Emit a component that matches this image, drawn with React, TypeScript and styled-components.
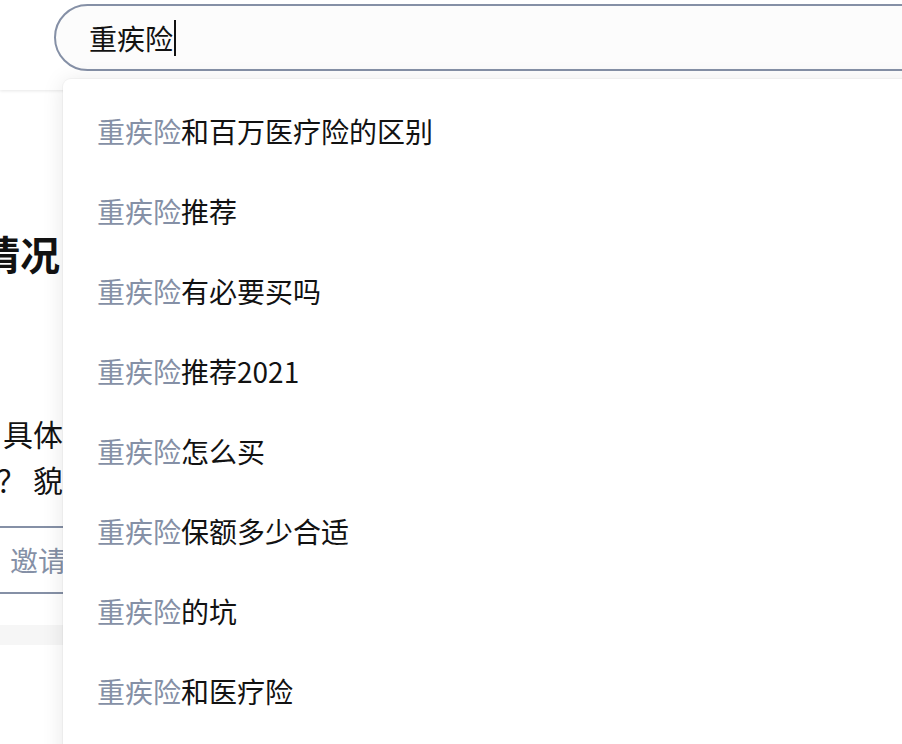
import styled, { createGlobalStyle } from "styled-components";

const GlobalStyle = createGlobalStyle`
  html, body {
    margin: 0;
    padding: 0;
    background: #ffffff;
    font-family: "Noto Sans CJK SC", "Noto Sans", sans-serif;
    color: #121212;
    overflow: hidden;
  }
`;

const PageSC = styled.div`
  position: relative;
  width: 902px;
  height: 744px;
  overflow: hidden;
  background: #f6f6f6;
`;

const HeaderSC = styled.header`
  position: relative;
  z-index: 1;
  height: 90px;
  background: #ffffff;
  box-shadow: 0 1px 3px rgba(18, 18, 18, 0.1);
  padding: 4px 0 0 54px;
  box-sizing: border-box;
`;

const SearchBoxSC = styled.div`
  display: flex;
  align-items: center;
  width: 1000px;
  height: 67px;
  box-sizing: border-box;
  border: 2px solid #8590a6;
  border-radius: 34px;
  background: #fcfcfc;
  padding-left: 33px;
  font-size: 28px;
  color: #121212;
`;

const CaretSC = styled.span`
  display: inline-block;
  width: 2px;
  height: 36px;
  background: #121212;
  margin-left: 1px;
`;

const CardSC = styled.section<{ $height?: number }>`
  background: #ffffff;
  padding: 135px 0 31px;
  box-sizing: border-box;
  margin-bottom: 20px;
  height: ${(p) => (p.$height ? `${p.$height}px` : "auto")};
`;

// only the left strip of the question card shows beside the dropdown
const ClipSC = styled.div`
  width: 63px;
  overflow: hidden;
`;

const RowSC = styled.div`
  display: flex;
  justify-content: flex-end;
  white-space: nowrap;
`;

const TitleSC = styled(RowSC)`
  font-size: 40px;
  line-height: 56px;
  font-weight: 700;
  padding-right: 3px;
  margin-bottom: 129px;
`;

const BodyLineSC = styled(RowSC)`
  font-size: 30px;
  line-height: 46px;
`;

const ActionsSC = styled.div`
  display: flex;
  margin-top: 24px;
  white-space: nowrap;
`;

const OutlineButtonSC = styled.div`
  display: flex;
  align-items: center;
  height: 68px;
  box-sizing: border-box;
  margin-left: -32px;
  padding: 0 30px 0 40px;
  border: 2px solid #8590a6;
  border-radius: 6px;
  color: #8590a6;
  font-size: 28px;
`;

const DropdownSC = styled.ul`
  position: absolute;
  z-index: 2;
  left: 63px;
  top: 79px;
  width: 900px;
  height: 720px;
  margin: 0;
  padding: 12px 0 0;
  list-style: none;
  background: #ffffff;
  border-radius: 8px;
  box-shadow: 0 0 0 1px rgba(18, 18, 18, 0.03), 0 2px 22px rgba(18, 18, 18, 0.1);
`;

const SuggestionSC = styled.li`
  height: 80px;
  line-height: 80px;
  padding-left: 34px;
  font-size: 28px;
  color: #121212;
  white-space: nowrap;
`;

const MatchSC = styled.span`
  color: #8590a6;
`;

const query = "重疾险";
const suggestions = [
  "和百万医疗险的区别",
  "推荐",
  "有必要买吗",
  "推荐2021",
  "怎么买",
  "保额多少合适",
  "的坑",
  "和医疗险",
  "哪家好",
];

export default function App() {
  return (
    <>
      <GlobalStyle />
      <PageSC>
        <HeaderSC>
          <SearchBoxSC>
            {query}
            <CaretSC />
          </SearchBoxSC>
        </HeaderSC>

        <CardSC>
          <ClipSC>
            <TitleSC>买重疾险需要了解哪些情况</TitleSC>
            <BodyLineSC>想了解一下重疾险。具体</BodyLineSC>
            <BodyLineSC>有没有人推荐？ 貌</BodyLineSC>
            <ActionsSC>
              <OutlineButtonSC>邀请回答</OutlineButtonSC>
            </ActionsSC>
          </ClipSC>
        </CardSC>
        <CardSC $height={200} />

        <DropdownSC>
          {suggestions.map((s) => (
            <SuggestionSC key={s}>
              <MatchSC>{query}</MatchSC>
              {s}
            </SuggestionSC>
          ))}
        </DropdownSC>
      </PageSC>
    </>
  );
}
